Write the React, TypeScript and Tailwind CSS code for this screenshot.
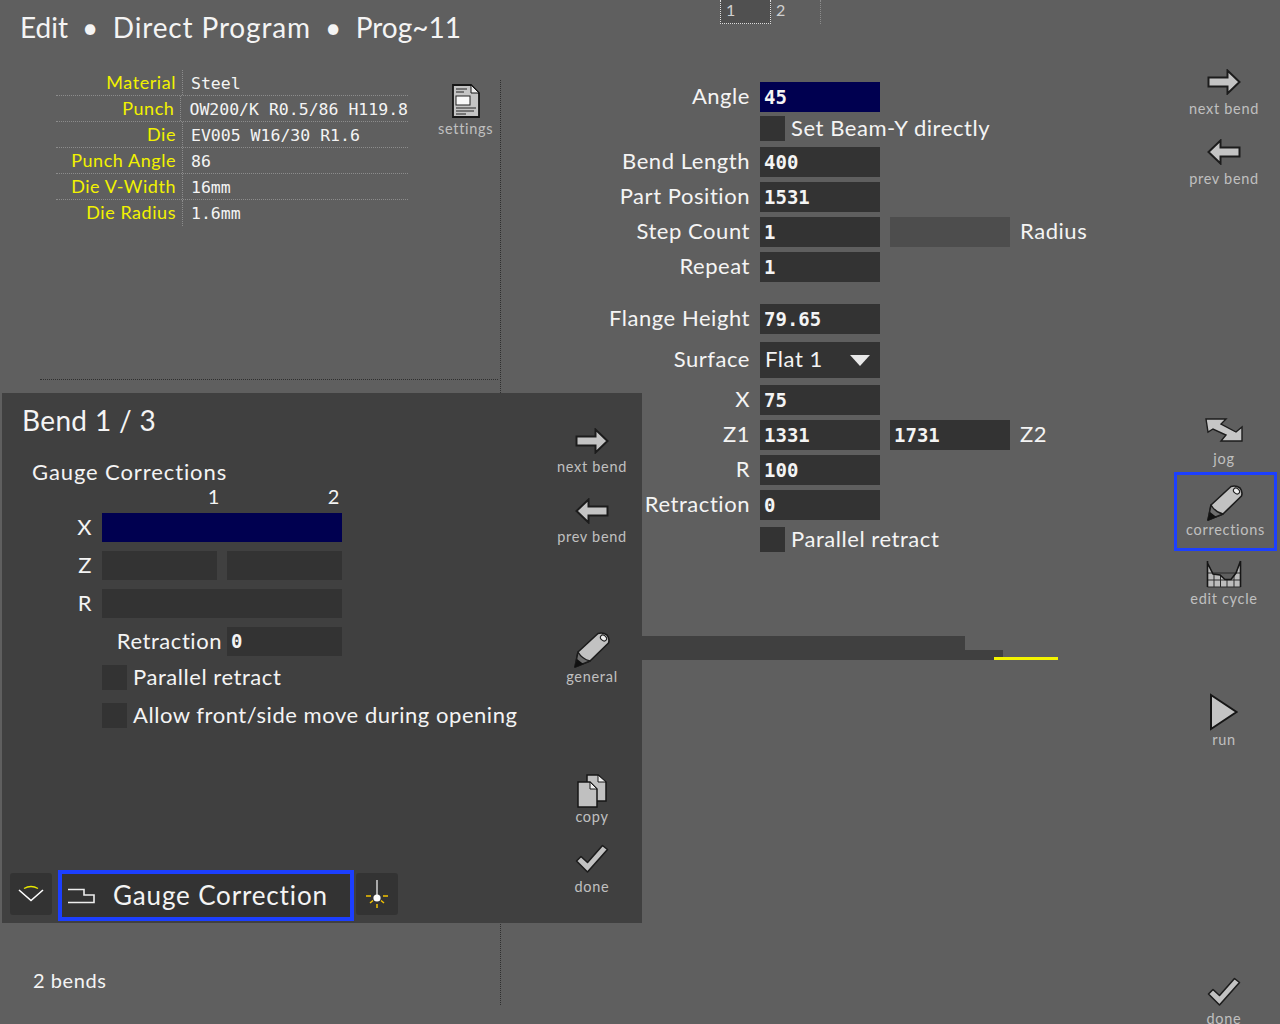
import type { ReactNode } from 'react';

const Arrow = ({ flip = false }: { flip?: boolean }) => (
    <svg width="34" height="26" viewBox="0 0 34 26" className={flip ? '-scale-x-100' : ''}>
        <path d="M1.5 8.5 H20.5 V1.5 L32.5 13 L20.5 24.5 V17.5 H1.5 Z" fill="#c4c4c4" stroke="#1c1c1c" strokeWidth="2" strokeLinejoin="miter" />
    </svg>
);

const Pencil = () => (
    <svg width="36" height="36" viewBox="0 0 36 36">
        <path d="M4 20 L24 1.5 Q29 0 33 3 Q36 7 34.5 11 L16 29 L1 35 Z" fill="#c2c2c2" stroke="#1c1c1c" strokeWidth="1.6" strokeLinejoin="round" />
        <path d="M4 20 Q8 27 16 29 L1 35 Z" fill="#6e6e6e" stroke="#1c1c1c" strokeWidth="1.4" strokeLinejoin="round" />
        <path d="M0.5 35.5 L3 27 L9.5 32 Z" fill="#111" />
        <ellipse cx="29.5" cy="6" rx="3.4" ry="2.6" transform="rotate(40 29.5 6)" fill="#efefef" stroke="#1c1c1c" strokeWidth="1" />
    </svg>
);

const Check = () => (
    <svg width="34" height="30" viewBox="0 0 34 30">
        <path d="M1.5 17 L6 12.5 L12.5 18.5 L27.5 1.5 L32.5 5.5 L12.5 28 Z" fill="#c2c2c2" stroke="#1c1c1c" strokeWidth="1.6" strokeLinejoin="round" />
    </svg>
);

const Jog = () => (
    <svg width="38" height="24" viewBox="0 0 38 24">
        <path d="M1 1 H21 L16 6 L31 14 L37 9 V23 H16 L21 17 L8 11 L3 14 Z" fill="#c6c6c6" stroke="#1c1c1c" strokeWidth="1.4" strokeLinejoin="miter" />
    </svg>
);

const EditCycle = () => (
    <svg width="36" height="28" viewBox="0 0 36 28">
        <path d="M1.5 4 L7 14 L14 15 L19 19 L25 19 L30 13 L34.5 1 V27 H1.5 Z" fill="#bcbcbc" />
        <path d="M1.5 13 H34.5 M1.5 20 H34.5 M1.5 27 H34.5 M8 14 V27 M14.5 15 V27 M21 19 V27 M28 15 V27" stroke="#2a2a2a" strokeWidth="1" fill="none" />
        <path d="M1.5 1 V27 M34.5 1 V27 M1.5 3 L7 14 L14 15 L19 19.5 L25 19.5 L30 13 L34.5 1" stroke="#161616" strokeWidth="1.6" fill="none" />
    </svg>
);

const Run = () => (
    <svg width="30" height="38" viewBox="0 0 30 38">
        <path d="M2 2 V36 L27.5 19 Z" fill="#c4c4c4" stroke="#161616" strokeWidth="2" strokeLinejoin="miter" />
    </svg>
);

const Copy = () => (
    <svg width="30" height="34" viewBox="0 0 30 34">
        <path d="M10 1 H21 L29 8 V27 H10 Z" fill="#c0c0c0" stroke="#161616" strokeWidth="1.5" />
        <path d="M21 1 V8 H29 Z" fill="#f0f0f0" stroke="#161616" strokeWidth="1" />
        <path d="M1 8 H13 L20 15 V33 H1 Z" fill="#c0c0c0" stroke="#161616" strokeWidth="1.5" />
        <path d="M13 8 V15 H20 Z" fill="#f0f0f0" stroke="#161616" strokeWidth="1" />
    </svg>
);

const Settings = () => (
    <svg width="28" height="34" viewBox="0 0 28 34">
        <path d="M1 1 H19 L27 9 V33 H1 Z" fill="#c4c4c4" stroke="#161616" strokeWidth="1.8" />
        <path d="M19 1 V9 H27 Z" fill="#ececec" stroke="#161616" strokeWidth="1" />
        <rect x="4" y="12" width="14" height="9" fill="#f8f8f8" stroke="#222" strokeWidth="1" />
        <path d="M4 5 H15 M4 8 H12 M4 24 H24 M4 27 H22 M4 30 H14" stroke="#222" strokeWidth="1.2" />
    </svg>
);

const ToolButton = ({ icon, label, className = '', labelClass = '' }: { icon: ReactNode; label: string; className?: string; labelClass?: string }) => (
    <div className={`shrink-0 flex flex-col items-center text-[14.5px] leading-[18px] tracking-[0.7px] text-[#c0c0c0] ${className}`}>
        {icon}
        <span className={labelClass}>{label}</span>
    </div>
);

const CheckRow = ({ children, className = '' }: { children: ReactNode; className?: string }) => (
    <div className={`flex items-center gap-[6px] text-[22px] leading-[23px] ${className}`}>
        <div className="w-[25px] h-[25px] bg-[#333333]" />
        <span className="pb-[2px]">{children}</span>
    </div>
);

const Field = ({ value, navy, muted }: { value?: string; navy?: boolean; muted?: boolean }) => (
    <div
        className={`w-[120px] h-[30px] flex items-center pl-1 font-['DejaVu_Sans_Mono',monospace] font-bold text-[19px] tracking-normal ${
            navy ? 'bg-[#000050]' : muted ? 'bg-[#4d4d4d]' : 'bg-[#333333]'
        }`}
    >
        {value}
    </div>
);

const FormRow = ({ label, children, className = '' }: { label: string; children: ReactNode; className?: string }) => (
    <div className={`flex items-center gap-[10px] ${className}`}>
        <span className="w-[249px] text-right text-[22px] leading-[27px] pb-[3px]">{label}</span>
        {children}
    </div>
);

const materialRows = [
    ['Material', 'Steel'],
    ['Punch', 'OW200/K R0.5/86 H119.8'],
    ['Die', 'EV005 W16/30 R1.6'],
    ['Punch Angle', '86'],
    ['Die V-Width', '16mm'],
    ['Die Radius', '1.6mm'],
];

const BendPanel = () => (
    <div className="absolute left-[2px] top-[393px] w-[640px] h-[530px] bg-[#404040] flex">
        <div className="relative w-[540px] pl-[20px] pt-[10px]">
            <div className="text-[28px] leading-[34px] tracking-[0.35px]">Bend 1 / 3</div>
            <div className="ml-[10px] mt-[20px] text-[22px] leading-[30px] tracking-[0.9px]">Gauge Corrections</div>
            <div className="flex w-[320px] justify-end gap-[108px] pr-[2px] text-[20px] leading-[18px] pb-[4px]">
                <span>1</span>
                <span>2</span>
            </div>
            <div className="mt-[4px] flex flex-col gap-[9px] text-[22px] leading-[27px]">
                <div className="flex items-center">
                    <span className="w-[70px] text-right pb-[2px]">X</span>
                    <div className="ml-[10px] w-[240px] h-[29px] bg-[#000050]" />
                </div>
                <div className="flex items-center">
                    <span className="w-[70px] text-right pb-[2px]">Z</span>
                    <div className="ml-[10px] w-[115px] h-[29px] bg-[#333333]" />
                    <div className="ml-[10px] w-[115px] h-[29px] bg-[#333333]" />
                </div>
                <div className="flex items-center">
                    <span className="w-[70px] text-right pb-[2px]">R</span>
                    <div className="ml-[10px] w-[240px] h-[29px] bg-[#333333]" />
                </div>
                <div className="flex items-center">
                    <span className="w-[200px] text-right pb-[2px]">Retraction</span>
                    <div className="ml-[5px] w-[115px] h-[29px] bg-[#333333] pl-1 flex items-center font-['DejaVu_Sans_Mono',monospace] font-bold text-[19px] tracking-normal">0</div>
                </div>
            </div>
            <CheckRow className="ml-[80px] mt-[9px]">Parallel retract</CheckRow>
            <CheckRow className="ml-[80px] mt-[13px]">Allow front/side move during opening</CheckRow>

            <div className="absolute left-[8px] top-[477px] flex items-center">
                <div className="-mt-[3px] w-[42px] h-[42px] rounded-[3px] bg-[#333333] flex items-center justify-center">
                    <svg width="26" height="18" viewBox="0 0 26 18">
                        <path d="M1 5 L13 15.5 L25 5" fill="none" stroke="#fff" strokeWidth="1.6" />
                        <path d="M6 3.5 Q13 -0.5 20 3.5" fill="none" stroke="#e8e800" strokeWidth="1.4" />
                    </svg>
                </div>
                <div className="ml-[6px] w-[296px] h-[51px] border-[4px] border-[#1c3fff] bg-[#333333] flex items-center pl-[5px] text-[26px] tracking-[0.85px]">
                    <svg width="28" height="16" viewBox="0 0 28 16">
                        <path d="M1 1.5 H17 V7 H27 V14.5 H1" fill="none" stroke="#eee" strokeWidth="1.6" />
                    </svg>
                    <span className="ml-[18px]">Gauge Correction</span>
                </div>
                <div className="-mt-[3px] ml-[2px] w-[42px] h-[42px] rounded-[3px] bg-[#333333] flex items-center justify-center">
                    <svg width="24" height="30" viewBox="0 0 24 30">
                        <path d="M12 1 V16" stroke="#ddd" strokeWidth="1.4" />
                        <circle cx="12" cy="19" r="3.6" fill="#fff" />
                        <path d="M1 17 H6 M18 17 H23 M5 24 L8 21.5 M19 24 L16 21.5 M12 25 V29" stroke="#f2c200" strokeWidth="1.5" />
                    </svg>
                </div>
            </div>
        </div>
        <div className="w-[100px] flex flex-col items-center pt-[35px]">
            <ToolButton icon={<Arrow />} label="next bend" className="h-[70px]" labelClass="mt-[4px]" />
            <ToolButton icon={<Arrow flip />} label="prev bend" className="h-[134px]" labelClass="mt-[4px]" />
            <ToolButton icon={<Pencil />} label="general" className="h-[143px]" />
            <ToolButton icon={<Copy />} label="copy" className="h-[70px] -mt-[1px]" />
            <ToolButton icon={<Check />} label="done" labelClass="mt-[4px]" />
        </div>
    </div>
);

export default function App() {
    return (
        <div className="relative w-[1280px] h-[1024px] overflow-hidden bg-[#5f5f5f] text-[#f4f4f4] font-['Lato',sans-serif] tracking-[0.55px] flex">
            <div className="w-[501px] h-[1005px]">
                <div className="pl-[20px] pt-[9px] text-[28px] leading-[36px] flex gap-[14px] whitespace-nowrap">
                    <span className="tracking-normal">Edit</span>
                    <span>•</span>
                    <span className="tracking-[0.85px]">Direct Program</span>
                    <span>•</span>
                    <span className="tracking-normal">Prog~11</span>
                </div>
                <div className="flex mt-[25px] ml-[56px]">
                    <div className="w-[352px]">
                        {materialRows.map(([k, v], i) => (
                            <div key={k} className={`flex h-[26px] items-center ${i < 5 ? 'border-b border-dotted border-[#8c8c8c]' : ''}`}>
                                <span className="w-[127px] h-full pr-[6px] border-r border-dotted border-[#8c8c8c] text-right text-[#f2f200] text-[18px] leading-[25px]">{k}</span>
                                <span className="pl-[8px] pt-[3px] whitespace-nowrap text-[16.5px] tracking-normal font-['DejaVu_Sans_Mono',monospace]">{v}</span>
                            </div>
                        ))}
                    </div>
                    <ToolButton icon={<Settings />} label="settings" className="ml-[30px] mt-[14px]" labelClass="mt-[2px]" />
                </div>
                <div className="ml-[40px] mr-[3px] mt-[153px] border-t border-dotted border-[#2f2f2f]" />
            </div>

            <div className="w-[660px]">
                <div className="ml-[219px] flex h-[24px] text-[16px] text-[#d0d0d0]">
                    <div className="w-[51px] border border-t-0 border-dotted border-[#dddddd] bg-[#505050] pl-[5px] leading-[20px]">1</div>
                    <div className="w-[50px] border-r border-dotted border-[#8c8c8c] pl-[5px] leading-[20px]">2</div>
                </div>
                <div className="mt-[58px] flex flex-col">
                    <FormRow label="Angle"><Field value="45" navy /></FormRow>
                    <CheckRow className="ml-[259px] mt-[4px]">Set Beam-Y directly</CheckRow>
                    <div className="mt-[6px] flex flex-col gap-[5px]">
                        <FormRow label="Bend Length"><Field value="400" /></FormRow>
                        <FormRow label="Part Position"><Field value="1531" /></FormRow>
                        <FormRow label="Step Count">
                            <Field value="1" />
                            <Field muted />
                            <span className="text-[22px] leading-[27px] pb-[3px]">Radius</span>
                        </FormRow>
                        <FormRow label="Repeat"><Field value="1" /></FormRow>
                    </div>
                    <FormRow label="Flange Height" className="mt-[22px]"><Field value="79.65" /></FormRow>
                    <FormRow label="Surface" className="mt-[8px]">
                        <div className="w-[120px] h-[36px] bg-[#333333] flex items-center justify-between pl-[5px] pr-[10px] text-[22px] leading-[27px]">
                            <span className="pb-[3px]">Flat 1</span>
                            <svg width="20" height="11" viewBox="0 0 20 11"><path d="M0 0 H20 L10 11 Z" fill="#e8e8e8" /></svg>
                        </div>
                    </FormRow>
                    <div className="mt-[7px] flex flex-col gap-[5px]">
                        <FormRow label="X"><Field value="75" /></FormRow>
                        <FormRow label="Z1">
                            <Field value="1331" />
                            <Field value="1731" />
                            <span className="text-[22px] leading-[27px] pb-[3px]">Z2</span>
                        </FormRow>
                        <FormRow label="R"><Field value="100" /></FormRow>
                        <FormRow label="Retraction"><Field value="0" /></FormRow>
                    </div>
                    <CheckRow className="ml-[259px] mt-[7px]">Parallel retract</CheckRow>
                </div>
            </div>

            <div className="w-[119px] flex flex-col items-center pt-[69px] pl-[7px]">
                <ToolButton icon={<Arrow />} label="next bend" className="h-[70px]" labelClass="mt-[5px]" />
                <ToolButton icon={<Arrow flip />} label="prev bend" className="h-[279px]" labelClass="mt-[5px]" />
                <ToolButton icon={<Jog />} label="jog" className="h-[54px]" labelClass="mt-[8px]" />
                <div className="shrink-0 ml-[3px] w-[103px] h-[79px] border-[3px] border-[#1c3fff] flex justify-center pt-[10px]">
                    <ToolButton icon={<Pencil />} label="corrections" />
                </div>
                <ToolButton icon={<EditCycle />} label="edit cycle" className="mt-[9px] h-[133px]" labelClass="mt-[2px]" />
                <ToolButton icon={<Run />} label="run" className="h-[284px]" />
                <ToolButton icon={<Check />} label="done" labelClass="mt-[3px]" />
            </div>

            <div className="absolute left-[500px] top-[80px] h-[925px] border-l border-dotted border-[#2f2f2f]" />

            <svg className="absolute left-[642px] top-[636px]" width="420" height="24" viewBox="0 0 420 24">
                <path d="M0 0 H323 V14 H361 V24 H0 Z" fill="#404040" />
                <rect x="352" y="21" width="64" height="3" fill="#f4f400" />
            </svg>

            <div className="absolute left-[33px] top-[967px] text-[20px] leading-[26px]">2 bends</div>

            <BendPanel />
        </div>
    );
}
